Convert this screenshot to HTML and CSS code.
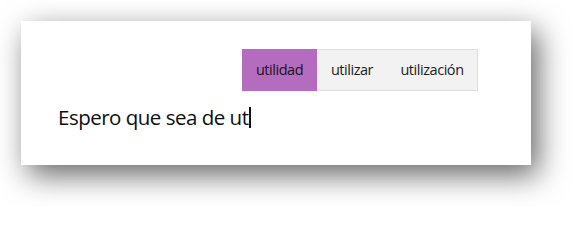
FILE: index.html
```html
<!DOCTYPE html>
<html lang="es">
<head>
<meta charset="utf-8">
<title>Sugerencias de texto</title>
<link rel="stylesheet" href="styles.css">
</head>
<body>
<div class="card">
  <div class="suggest-row">
    <div class="suggest-bar">
      <span class="cell cell-active cell-w1">utilidad</span>
      <span class="cell cell-w2">utilizar</span>
      <span class="cell cell-w3">utilización</span>
    </div>
  </div>
  <div class="input-line">Espero que sea de ut<span class="caret"></span></div>
</div>
</body>
</html>
```
FILE: styles.css
```css
html, body {
  margin: 0;
  padding: 0;
  background: #ffffff;
}
body {
  width: 573px;
  height: 207px;
  overflow: hidden;
  font-family: "Open Sans", "Noto Sans", sans-serif;
}
.card {
  margin: 21px 0 0 21px;
  width: 510px;
  height: 144px;
  box-sizing: border-box;
  background: #ffffff;
  box-shadow: 7px 10px 28px rgba(0, 0, 0, 0.6);
  padding: 28px 53px 0 37px;
}
.suggest-row {
  display: flex;
  justify-content: flex-end;
}
.suggest-bar {
  display: flex;
  height: 42px;
  box-sizing: border-box;
  border: 1px solid #dedede;
  background: #f2f2f2;
}
.cell {
  display: flex;
  align-items: center;
  justify-content: center;
  font-size: 14.5px;
  letter-spacing: -0.45px;
  color: #1c1c1c;
  margin-top: -1px;
  margin-bottom: -1px;
  box-sizing: border-box;
  padding-bottom: 1px;
}
.cell-w1 { width: 75px; margin-left: -1px; }
.cell-w2 { width: 70px; }
.cell-w3 { width: 90px; }
.cell-active {
  background: #b46cbf;
  color: #1e1020;
}
.input-line {
  margin-top: 12px;
  font-size: 20.5px;
  letter-spacing: -0.5px;
  line-height: 28px;
  color: #0e0e0e;
  display: flex;
  align-items: center;
}
.caret {
  display: inline-block;
  width: 1.5px;
  height: 21px;
  background: #111111;
  margin-left: 1px;
}
```
